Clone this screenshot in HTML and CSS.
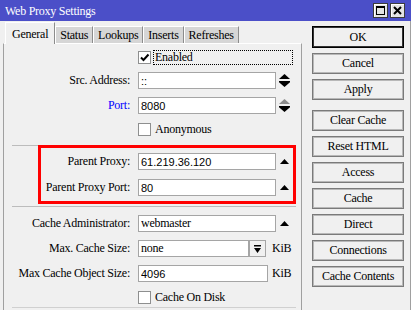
FILE: index.html
```html
<!DOCTYPE html>
<html lang="en">
<head>
  <meta charset="UTF-8" />
  <title>Web Proxy Settings</title>
  <link rel="stylesheet" href="styles.css">
</head>
<body>
  <div class="window">
    <!-- Title bar -->
    <div class="titlebar">
      <span class="title">Web Proxy Settings</span>
      <div class="wbtns">
        <span class="wbtn">
          <svg width="9" height="9" viewBox="0 0 9 9"><rect x="0.5" y="0.5" width="8" height="8" fill="none" stroke="#000"/><rect x="0" y="0" width="9" height="2"/></svg>
        </span>
        <span class="wbtn">
          <svg width="9" height="9" viewBox="0 0 9 9"><path d="M1 1 L8 8 M8 1 L1 8" stroke="#000" stroke-width="2"/></svg>
        </span>
      </div>
    </div>

    <div class="main">
      <div class="left">
        <!-- Tabs -->
        <div class="tabs">
          <div class="tab active">General</div>
          <div class="tab">Status</div>
          <div class="tab">Lookups</div>
          <div class="tab">Inserts</div>
          <div class="tab">Refreshes</div>
        </div>

        <div class="panel">
          <!-- General -->
          <div class="group first">
            <div class="row check-row">
              <span class="lbl"></span>
              <span class="check">
                <svg width="11" height="11" viewBox="0 0 11 11"><path d="M2 5.5 L4.5 8 L9.5 2.5" fill="none" stroke="#000" stroke-width="2"/></svg>
              </span>
              <span class="check-lbl focus">Enabled</span>
            </div>
            <div class="row">
              <span class="lbl">Src. Address:</span>
              <input class="field num" value="::" />
              <span class="arrows">
                <svg width="11" height="13" viewBox="0 0 11 13"><path d="M0 5 L5.5 0 L11 5Z"/><path d="M0 7h11v1.2H0z M0 8.2h11L5.5 13z"/></svg>
              </span>
            </div>
            <div class="row">
              <span class="lbl blue">Port:</span>
              <input class="field num" value="8080" />
              <span class="arrows">
                <svg width="11" height="13" viewBox="0 0 11 13"><path d="M0 5 L5.5 0 L11 5Z" fill="#8c8c8c"/><path d="M0 7h11v1.2H0z M0 8.2h11L5.5 13z"/></svg>
              </span>
            </div>
            <div class="row check-row">
              <span class="lbl"></span>
              <span class="check"></span>
              <span class="check-lbl">Anonymous</span>
            </div>
          </div>

          <!-- Parent proxy -->
          <div class="group">
            <div class="redbox">
              <div class="row">
                <span class="lbl">Parent Proxy:</span>
                <input class="field num" value="61.219.36.120" />
                <span class="up">
                  <svg width="9" height="5" viewBox="0 0 9 5"><path d="M0 5 L4.5 0 L9 5Z"/></svg>
                </span>
              </div>
              <div class="row">
                <span class="lbl">Parent Proxy Port:</span>
                <input class="field num" value="80" />
                <span class="up">
                  <svg width="9" height="5" viewBox="0 0 9 5"><path d="M0 5 L4.5 0 L9 5Z"/></svg>
                </span>
              </div>
            </div>
          </div>

          <!-- Cache -->
          <div class="group last">
            <div class="row">
              <span class="lbl">Cache Administrator:</span>
              <input class="field" value="webmaster" />
              <span class="up">
                <svg width="9" height="5" viewBox="0 0 9 5"><path d="M0 5 L4.5 0 L9 5Z"/></svg>
              </span>
            </div>
            <div class="row">
              <span class="lbl">Max. Cache Size:</span>
              <input class="field short" value="none" />
              <span class="dd">
                <svg width="7" height="8" viewBox="0 0 7 8"><path d="M0 0h7v1.5H0z M0 3h7L3.5 8z"/></svg>
              </span>
              <span class="unit">KiB</span>
            </div>
            <div class="row">
              <span class="lbl">Max Cache Object Size:</span>
              <input class="field mid num" value="4096" />
              <span class="unit near">KiB</span>
            </div>
            <div class="row check-row">
              <span class="lbl"></span>
              <span class="check"></span>
              <span class="check-lbl">Cache On Disk</span>
            </div>
          </div>
        </div>
      </div>

      <!-- Buttons -->
      <div class="side">
        <div class="btn default">OK</div>
        <div class="btn">Cancel</div>
        <div class="btn">Apply</div>
        <div class="btn spaced">Clear Cache</div>
        <div class="btn">Reset HTML</div>
        <div class="btn">Access</div>
        <div class="btn">Cache</div>
        <div class="btn">Direct</div>
        <div class="btn">Connections</div>
        <div class="btn">Cache Contents</div>
      </div>
    </div>
  </div>
</body>
</html>
```

FILE: styles.css
```css
/* Page */
body {
  margin: 0;
  background-color: #f0f0f0;
  font-family: "Liberation Serif", serif;
  font-size: 12px;
  letter-spacing: -0.25px;
  color: #000;
  overflow: hidden;
}

.window {
  width: 411px;
  height: 310px;
  overflow: hidden;
}

/* Title bar */
.titlebar {
  height: 21px;
  background-color: #4b4fc8;
  color: #fff;
  display: flex;
  align-items: center;
  justify-content: space-between;
  padding: 0 6px 0 5px;
}
.title {
  font-size: 12px;
  padding-top: 1px;
}
.wbtns {
  display: flex;
  gap: 2px;
}
.wbtn {
  width: 15px;
  height: 15px;
  box-sizing: border-box;
  background-color: #e4e4e4;
  border: 1px solid #3c3c3c;
  box-shadow: inset 1px 1px 0 #fff;
  display: flex;
  align-items: center;
  justify-content: center;
}

/* Main area */
.main {
  display: flex;
  height: 289px;
  border-right: 1px solid #a0a0a0;
  box-sizing: border-box;
}
.left {
  width: 299px;
  margin-left: 3px;
  display: flex;
  flex-direction: column;
}

/* Tabs */
.tabs {
  height: 22px;
  display: flex;
  align-items: flex-end;
  padding-left: 2px;
  position: relative;
  z-index: 1;
}
.tab {
  height: 17px;
  line-height: 17px;
  padding: 0 4px;
  box-sizing: border-box;
  background-color: #d6d6d6;
  border-top: 1px solid #fff;
  border-left: 1px solid #fff;
  border-right: 1px solid #8c8c8c;
}
.tab.active {
  height: 22px;
  line-height: 22px;
  padding: 0 6px;
  background-color: #f0f0f0;
  margin-bottom: -1px;
}

/* Panel */
.panel {
  flex: 1;
  border-top: 1px solid #fff;
  border-left: 1px solid #a0a0a0;
  border-right: 1px solid #a0a0a0;
}
.group {
  margin: 0 5px 0 8px;
  display: flex;
  flex-direction: column;
  gap: 8px;
  border-top: 1px solid #bcbcbc;
  padding-bottom: 2px;
}
.group.first {
  border-top: none;
  padding: 6px 0 9px;
}
.group.last {
  padding: 8px 0 3px;
  border-bottom: 1px solid #d0d0d0;
}

.redbox {
  margin: -1px 0 0 26px;
  border: 3px solid #f00;
  padding: 5px 0;
  display: flex;
  flex-direction: column;
  gap: 9px;
}
.redbox .lbl {
  width: 89px;
}

/* Rows */
.row {
  display: flex;
  align-items: center;
  height: 17px;
}
.check-row {
  height: 14px;
}
.lbl {
  width: 118px;
  margin-right: 8px;
  text-align: right;
  white-space: nowrap;
}
.blue {
  color: #0000ff;
}

.field {
  width: 138px;
  height: 17px;
  box-sizing: border-box;
  margin: 0;
  border: 1px solid #a5a5a5;
  background-color: #fff;
  padding: 0 2px;
  font-family: "Liberation Serif", serif;
  font-size: 12px;
  letter-spacing: -0.25px;
  color: #000;
  outline: none;
}
.field.num {
  font-family: "Liberation Sans", sans-serif;
  font-size: 11px;
  letter-spacing: 0;
}
.field.short {
  width: 111px;
}
.field.mid {
  width: 130px;
}

.arrows {
  margin-left: 3px;
  display: flex;
}
.up {
  margin-left: 4px;
  display: flex;
}
.dd {
  width: 17px;
  height: 17px;
  box-sizing: border-box;
  margin-left: 0;
  border: 1px solid #a5a5a5;
  display: flex;
  align-items: center;
  justify-content: center;
}
.unit {
  margin-left: 6px;
}
.unit.near {
  margin-left: 4px;
}

/* Checkboxes */
.check {
  width: 13px;
  height: 13px;
  box-sizing: border-box;
  border: 1px solid #8e8f8f;
  background-color: #fff;
  display: flex;
  align-items: center;
  justify-content: center;
}
.check-lbl {
  margin-left: 4px;
}
.check-lbl.focus {
  margin-left: 3px;
  width: 138px;
  height: 13px;
  line-height: 12px;
  padding-left: 1px;
  box-sizing: border-box;
  outline: 1px dotted #000;
}

/* Right buttons */
.side {
  padding: 5px 0 0 10px;
  display: flex;
  flex-direction: column;
  gap: 5px;
}
.btn {
  width: 92px;
  height: 21px;
  box-sizing: border-box;
  border: 1px solid #7a7a7a;
  box-shadow: inset 0 0 0 1px #b8b8b8;
  background-color: #f0f0f0;
  display: flex;
  align-items: center;
  justify-content: center;
  white-space: nowrap;
}
.btn.default {
  height: 22px;
  border: 1px solid #000;
  box-shadow: inset 0 0 0 1px #333;
}
.btn.spaced {
  margin-top: 5px;
}
```
